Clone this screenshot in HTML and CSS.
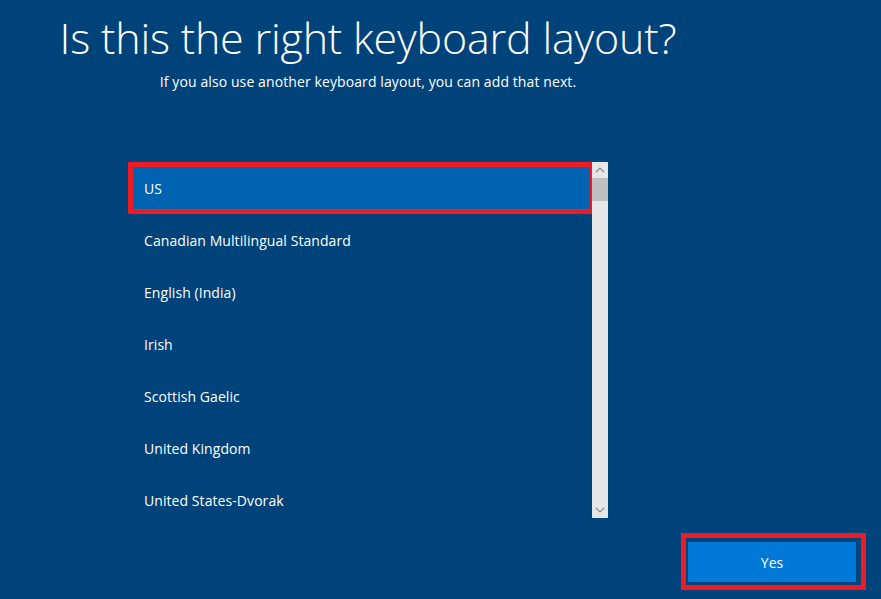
FILE: index.html
```html
<!DOCTYPE html>
<html lang="en">
<head>
    <meta charset="UTF-8">
    <meta name="viewport" content="width=device-width, initial-scale=1.0">
    <title>Keyboard layout</title>
    <link rel="stylesheet" href="styles.css">
</head>
<body>

    <div class="page">
        <!-- Heading -->
        <div class="header">
            <h1>Is this the right keyboard layout?</h1>
            <p>If you also use another keyboard layout, you can add that next.</p>
        </div>

        <!-- Layout list -->
        <div class="list-box">
            <ul class="layout-list">
                <li class="selected"><span>US</span></li>
                <li><span>Canadian Multilingual Standard</span></li>
                <li><span>English (India)</span></li>
                <li><span>Irish</span></li>
                <li><span>Scottish Gaelic</span></li>
                <li><span>United Kingdom</span></li>
                <li><span>United States-Dvorak</span></li>
            </ul>
            <div class="scrollbar">
                <div class="arrow">
                    <svg width="10" height="6" viewBox="0 0 10 6"><path d="M1 5 L5 1 L9 5" fill="none" stroke="#8a8a8a" stroke-width="1.2"/></svg>
                </div>
                <div class="thumb"></div>
                <div class="track"></div>
                <div class="arrow">
                    <svg width="10" height="6" viewBox="0 0 10 6"><path d="M1 1 L5 5 L9 1" fill="none" stroke="#8a8a8a" stroke-width="1.2"/></svg>
                </div>
            </div>
        </div>

        <!-- Footer -->
        <div class="footer">
            <div class="btn-frame">
                <button class="btn">Yes</button>
            </div>
        </div>
    </div>

</body>
</html>
```

FILE: styles.css
```css
* {
    box-sizing: border-box;
    margin: 0;
    padding: 0;
}

body {
    background: #00437a;
    width: 881px;
    height: 599px;
    overflow: hidden;
    font-family: 'Open Sans', 'Noto Sans', sans-serif;
    color: white;
}

.page {
    display: flex;
    flex-direction: column;
    height: 100%;
}

/* Heading */
.header {
    width: 736px;
    text-align: center;
    padding-top: 12px;
}

.header h1 {
    font-weight: 300;
    font-size: 43px;
    line-height: 52px;
    letter-spacing: -0.2px;
}

.header p {
    font-size: 14px;
    line-height: 20px;
    margin-top: 8px;
    letter-spacing: 0.1px;
}

/* List */
.list-box {
    display: flex;
    width: 480px;
    height: 356px;
    margin-left: 128px;
    margin-top: 70px;
}

.layout-list {
    list-style: none;
    flex: 1;
    overflow: hidden;
}

.layout-list li {
    height: 52px;
    display: flex;
    align-items: center;
    padding-left: 16px;
    font-size: 14px;
    letter-spacing: 0.07px;
}

.layout-list li.selected {
    background: #0063b1;
    border: 5px solid #ed1c24;
    border-right-width: 2px;
    padding-left: 11px;
    box-shadow: 1px 0 0 0 #004275;
    position: relative;
}

.layout-list li.selected::after {
    content: '';
    position: absolute;
    top: -5px;
    bottom: -5px;
    right: -3px;
    border-right: 1px dotted #ffffff;
}

.scrollbar {
    width: 16px;
    background: #e6e6e6;
    display: flex;
    flex-direction: column;
}

.scrollbar .arrow {
    height: 16px;
    display: flex;
    align-items: center;
    justify-content: center;
}

.scrollbar .thumb {
    height: 23px;
    background: #bfbfbf;
}

.scrollbar .track {
    flex: 1;
}

/* Footer */
.footer {
    display: flex;
    justify-content: flex-end;
    padding-right: 15px;
    margin-top: 15px;
}

.btn-frame {
    border: 5px solid #ed1c24;
    padding: 4px 5px 3px 2px;
}

.btn {
    display: block;
    width: 168px;
    height: 40px;
    background: #0078d7;
    color: white;
    border: none;
    font-family: 'Open Sans', 'Noto Sans', sans-serif;
    font-size: 14px;
}
```
